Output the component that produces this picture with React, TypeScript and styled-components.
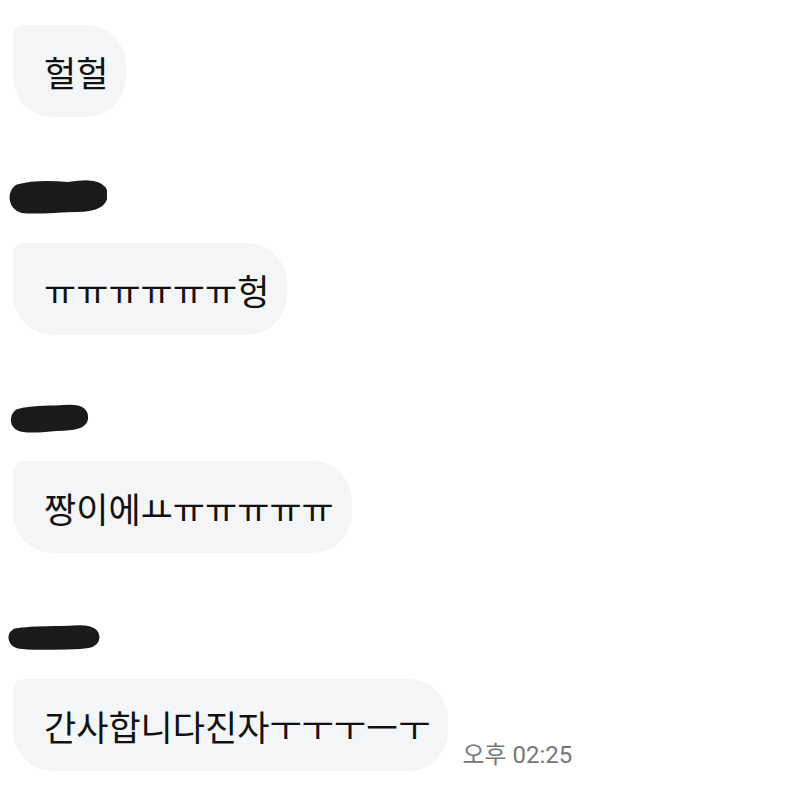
import React from 'react';
import styled, { createGlobalStyle } from 'styled-components';

const GlobalStyle = createGlobalStyle`
  html, body {
    margin: 0;
    padding: 0;
    background: #ffffff;
  }
  body {
    font-family: 'Noto Sans CJK KR', 'Noto Sans', sans-serif;
  }
`;

interface IMessage {
  text: string;
  name?: 'a' | 'b' | 'c';
  time?: string;
}

const messages: IMessage[] = [
  { text: '헐헐' },
  { text: 'ㅠㅠㅠㅠㅠㅠ헝', name: 'a' },
  { text: '짱이에ㅛㅠㅠㅠㅠㅠ', name: 'b' },
  { text: '간사합니다진자ㅜㅜㅜㅡㅜ', name: 'c', time: '오후 02:25' },
];

// hand drawn marker scribbles covering the sender names
const scribbles = {
  a: (
    <svg width="100" height="40" viewBox="0 0 100 40">
      <path
        d="M13 15 C30 10 50 12 62 13 C76 11 88 10 92 15 C95 22 88 27 70 27 C50 27 30 30 16 28 C10 26 9 19 13 15 Z"
        fill="#1a1a1a"
        stroke="#1a1a1a"
        strokeWidth="16"
        strokeLinejoin="round"
      />
    </svg>
  ),
  b: (
    <svg width="90" height="34" viewBox="0 0 90 34">
      <path
        d="M12 14 C24 10 40 11 56 10 C68 9 74 10 75 15 C76 22 66 24 50 24 C34 25 20 27 13 24 C9 22 9 17 12 14 Z"
        fill="#1a1a1a"
        stroke="#1a1a1a"
        strokeWidth="12"
        strokeLinejoin="round"
      />
      <path d="M22 8 L36 7 M44 7 L58 7" stroke="#1a1a1a" strokeWidth="3" />
    </svg>
  ),
  c: (
    <svg width="100" height="30" viewBox="0 0 100 30">
      <path
        d="M9 11 C26 8 50 9 66 8 C80 7 87 9 87 14 C87 20 78 21 60 21 C40 21 22 22 12 20 C6 18 6 13 9 11 Z"
        fill="#1a1a1a"
        stroke="#1a1a1a"
        strokeWidth="11"
        strokeLinejoin="round"
      />
    </svg>
  ),
};

export default function App() {
  return (
    <>
      <GlobalStyle />
      <StChat>
        {messages.map((m, i) => (
          <StGroup key={i}>
            {m.name && <StName>{scribbles[m.name]}</StName>}
            <StRow>
              <StBubble>{m.text}</StBubble>
              {m.time && <StTime>{m.time}</StTime>}
            </StRow>
          </StGroup>
        ))}
      </StChat>
    </>
  );
}

const StChat = styled.div`
  width: 800px;
  height: 804px;
  box-sizing: border-box;
  padding: 25px 0 0 13px;
  display: flex;
  flex-direction: column;
  overflow: hidden;
`;

const StGroup = styled.div`
  display: flex;
  flex-direction: column;
`;

const StName = styled.div`
  height: 126px;
  display: flex;
  align-items: flex-end;
  padding-bottom: 26px;
  box-sizing: border-box;
  margin-left: -6px;
`;

const StRow = styled.div`
  display: flex;
  align-items: flex-end;
  gap: 14px;
`;

const StBubble = styled.div`
  height: 92px;
  box-sizing: border-box;
  padding: 0 18px 0 31px;
  display: flex;
  align-items: center;
  background-color: #f4f5f7;
  border-radius: 10px 40px 40px 40px;
  color: #111111;
  font-size: 35px;
  line-height: 1;
  white-space: nowrap;
`;

const StTime = styled.div`
  color: #777777;
  font-family: Roboto, 'Noto Sans CJK KR', sans-serif;
  font-size: 24px;
  line-height: 1;
  margin-bottom: 4px;
  white-space: nowrap;
`;
